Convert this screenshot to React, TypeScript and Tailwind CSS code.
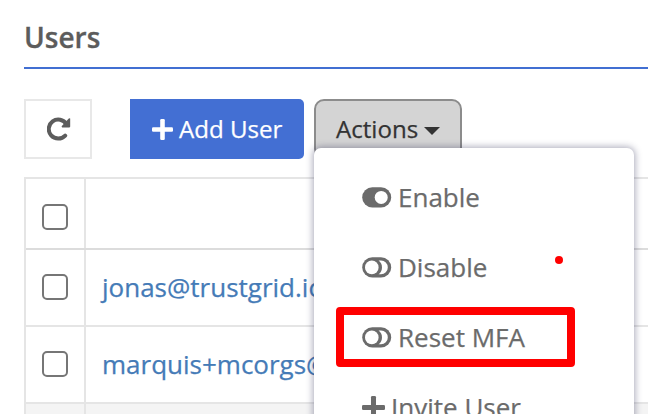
import React from "react";

function ToggleOn() {
  return (
    <svg className="block h-[21px] w-[30px] shrink-0" viewBox="0 0 30 21">
      <rect x="0.2" y="0.2" width="29" height="20.4" rx="10.2" fill="#6b6b6b" />
      <circle cx="19.2" cy="10.4" r="6.5" fill="#fff" />
    </svg>
  );
}

function ToggleOff() {
  return (
    <svg className="block h-[21px] w-[30px] shrink-0" viewBox="0 0 30 21">
      <rect x="0.2" y="0.2" width="29" height="20.4" rx="10.2" fill="#6b6b6b" />
      <circle cx="9.8" cy="10.4" r="6.8" fill="#fff" />
      <path d="M16.6 3.6H19A6.8 6.8 0 0 1 19 17.2H16.6Q20 14.6 20 10.4T16.6 3.6Z" fill="#fff" />
    </svg>
  );
}

function Plus({ className }: { className: string }) {
  return (
    <svg className={className} viewBox="0 0 22 22" fill="currentColor">
      <rect x="0" y="8.6" width="22" height="4.8" rx="1.3" />
      <rect x="8.6" y="0" width="4.8" height="22" rx="1.3" />
    </svg>
  );
}

function Refresh() {
  return (
    <svg className="ml-px h-6 w-6" viewBox="0 0 24 24">
      <path d="M19.4 7.2A9.5 9.5 0 1 0 18.2 18.6" fill="none" stroke="#5c5c5c" strokeWidth="4" strokeLinecap="round" />
      <path d="M23.2 1.6V9.6Q23.2 10.4 22.4 10.4H15.2Q14.2 10 14.8 9.1L21.8 1.4Q22.7 0.8 23.2 1.6Z" fill="#5c5c5c" />
    </svg>
  );
}

function Checkbox() {
  return <span className="block h-[26px] w-[26px] rounded-[5px] border-2 border-[#767676] bg-white" />;
}

type RowProps = { email?: string; className: string; cell: string };

function Row({ email, className, cell }: RowProps) {
  return (
    <div className={`flex border-b-2 ${className}`}>
      <div className={`flex w-[60px] shrink-0 items-center justify-center border-r-2 border-[#e5e5e5] ${cell}`}>
        <Checkbox />
      </div>
      <div className="flex flex-1 items-center pb-px pl-4 text-[26px] text-[#457bb7] [-webkit-text-stroke:0.25px]">
        {email}
      </div>
    </div>
  );
}

type ItemProps = { icon: React.ReactNode; label: string; gap: string };

function MenuItem({ icon, label, gap }: ItemProps) {
  return (
    <li className={`flex h-[70px] items-center pl-12 text-[26px] text-[#6b6b6b] [-webkit-text-stroke:0.25px] ${gap}`}>
      {icon}
      <span className="pt-px">{label}</span>
    </li>
  );
}

export default function App() {
  return (
    <div className="h-[414px] w-[648px] overflow-hidden whitespace-nowrap bg-white pl-6 font-['Open_Sans',sans-serif]">
      <h1 className="flex h-[69px] items-center border-b-2 border-[#416fd2] pt-1.5 text-[28px] font-semibold text-[#5c5c5c] [-webkit-text-stroke:0.3px]">
        Users
      </h1>

      <div className="flex h-[108px] pt-[30px]">
        <button className="flex h-[60px] w-[68px] items-center justify-center border-2 border-[#e8e8e8]">
          <Refresh />
        </button>
        <button className="ml-[38px] flex h-[60px] w-[174px] items-center gap-[6px] rounded-r-[5px] bg-[#436fd3] pl-[22px] text-[24.1px] text-white [-webkit-text-stroke:0.25px]">
          <Plus className="h-[21px] w-[21px]" />
          <span>Add User</span>
        </button>
        <div className="relative ml-[10px]">
          <button className="flex h-[60px] w-[148px] items-center gap-[6px] rounded-[10px] border-2 border-[#8c8c8c] bg-[#d4d4d4] pl-5 text-[24.1px] text-[#333] [-webkit-text-stroke:0.25px]">
            <span>Actions</span>
            <svg className="mt-[3px] h-2 w-4" viewBox="0 0 16 8">
              <path d="M0 0H16L8 8Z" fill="#333" />
            </svg>
          </button>
          <div className="absolute left-0 top-[49px] z-10 h-[320px] w-[320px] rounded-[7px] bg-white pt-[14px] shadow-[0_0_7px_1px_rgba(40,40,80,0.4)]">
            <ul>
              <MenuItem icon={<ToggleOn />} label="Enable" gap="gap-[6px]" />
              <MenuItem icon={<ToggleOff />} label="Disable" gap="gap-[6px]" />
              <MenuItem icon={<ToggleOff />} label="Reset MFA" gap="gap-[6px]" />
              <MenuItem icon={<Plus className="h-[23px] w-[23px]" />} label="Invite User" gap="gap-[6px]" />
            </ul>
            <span className="absolute left-[241px] top-[108px] h-2 w-2 rounded-full bg-[#ff0000]" />
            <span className="absolute left-[22px] top-[159px] h-[60px] w-[239px] rounded-[4px] border-8 border-[#ff0000]" />
          </div>
        </div>
      </div>

      <div className="h-[260px] border-l-2 border-t-2 border-[#e5e5e5]">
        <Row className="h-[71px] border-[#dcdcdc]" cell="pt-[7px]" />
        <Row email="jonas@trustgrid.io" className="h-[77px] border-[#e5e5e5]" cell="pb-px" />
        <Row email="marquis+mcorgs@trustgrid.io" className="h-[77px] border-[#e5e5e5]" cell="pb-px" />
        <Row className="h-[77px] border-[#e5e5e5] bg-[#f4f4f4]" cell="" />
      </div>
    </div>
  );
}
